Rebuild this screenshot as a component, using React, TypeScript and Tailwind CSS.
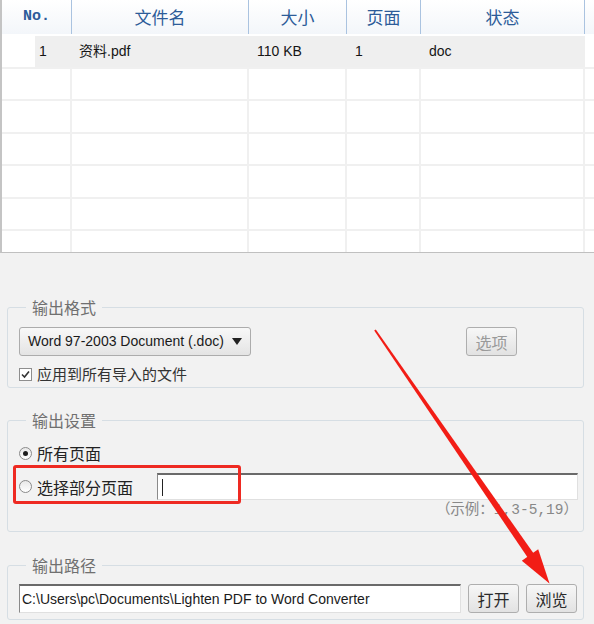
import React from "react";

const cjk = { fontFamily: '"Noto Sans CJK SC", "Liberation Sans", sans-serif' };
const latin = { fontFamily: '"Liberation Sans", "Noto Sans CJK SC", sans-serif' };

function HeaderCell({ w, children, mono }: { w: string; children?: React.ReactNode; mono?: boolean }) {
  return (
    <div
      className={`${w} h-full shrink-0 flex items-center justify-center border-r border-[#aac3e0] text-[#2d5c99] ${
        mono ? "text-[15px] font-bold" : "text-[17px]"
      }`}
      style={mono ? { fontFamily: '"Liberation Mono", monospace' } : cjk}
    >
      {children}
    </div>
  );
}

function EmptyRow() {
  return (
    <div className="h-[32.5px] flex border-t-2 border-[#f0f0f0] shrink-0">
      <div className="w-[72px] shrink-0 border-r-2 border-[#f0f0f0]" />
      <div className="w-[177px] shrink-0 border-r-2 border-[#f0f0f0]" />
      <div className="w-[98px] shrink-0 border-r-2 border-[#f0f0f0]" />
      <div className="w-[74px] shrink-0 border-r-2 border-[#f0f0f0]" />
      <div className="w-[164px] shrink-0 border-r-2 border-[#f0f0f0]" />
      <div className="flex-1" />
    </div>
  );
}

function Button({ children, disabled }: { children: React.ReactNode; disabled?: boolean }) {
  return (
    <div
      className={`w-[51px] h-[29px] shrink-0 flex items-center justify-center rounded-[3px] border border-[#aeaeae] bg-gradient-to-b from-[#f7f7f7] to-[#e2e2e2] text-[16px] ${
        disabled ? "text-[#9a9a9a]" : "text-[#2a2a2a]"
      }`}
      style={cjk}
    >
      {children}
    </div>
  );
}

function Legend({ children }: { children: React.ReactNode }) {
  return (
    <legend className="ml-[7px] px-[6px] text-[16px] leading-[20px] text-[#707070]" style={cjk}>
      {children}
    </legend>
  );
}

function Radio({ checked }: { checked?: boolean }) {
  return (
    <div className="w-[13px] h-[13px] shrink-0 rounded-full border border-[#8a8a8a] bg-gradient-to-b from-[#e8e8e8] to-white flex items-center justify-center">
      {checked && <div className="w-[5px] h-[5px] rounded-full bg-[#1e1e1e]" />}
    </div>
  );
}

export default function App() {
  return (
    <div className="relative w-[594px] h-[624px] overflow-hidden bg-[#f2f2f2]" style={latin}>
      {/* Table */}
      <div className="h-[253px] bg-white border-l-2 border-b border-l-[#c4c4c4] border-b-[#c0c0c0] flex flex-col overflow-hidden">
        <div className="h-[34px] shrink-0 flex bg-gradient-to-b from-white to-[#f3f6fa]">
          <HeaderCell w="w-[70px]" mono>
            No.
          </HeaderCell>
          <HeaderCell w="w-[177px]">文件名</HeaderCell>
          <HeaderCell w="w-[98px]">大小</HeaderCell>
          <HeaderCell w="w-[74px]">页面</HeaderCell>
          <HeaderCell w="w-[164px]">状态</HeaderCell>
          <div className="flex-1" />
        </div>
        {/* Row 1 */}
        <div className="h-[32.5px] shrink-0 flex border-t-2 border-white">
          <div className="w-[33px] shrink-0" />
          <div className="w-[550px] shrink-0 bg-[#efefef] flex items-center text-[14px] text-[#151515]">
            <div className="w-[37px] shrink-0 pl-[4px]">1</div>
            <div className="w-[177px] shrink-0 pl-[7px]">
              <span style={cjk}>资料</span>.pdf
            </div>
            <div className="w-[98px] shrink-0 pl-[8px]">110 KB</div>
            <div className="w-[74px] shrink-0 pl-[8px]">1</div>
            <div className="w-[164px] shrink-0 pl-[8px]">doc</div>
          </div>
          <div className="flex-1 border-l-2 border-white" />
        </div>
        <div className="ml-[-2px] flex flex-col">
          <EmptyRow />
          <EmptyRow />
          <EmptyRow />
          <EmptyRow />
          <EmptyRow />
          <EmptyRow />
        </div>
      </div>

      {/* 输出格式 */}
      <fieldset className="mt-[44px] ml-[7px] w-[577px] border border-[#d6dee4] rounded-[3px] pl-[11px] pr-[5px] pb-[3px]">
        <Legend>输出格式</Legend>
        <div className="pt-[10px] flex items-center">
          <div className="w-[232px] h-[29px] shrink-0 flex items-center justify-between pl-[8px] pr-[8px] rounded-[3px] border border-[#acacac] bg-gradient-to-b from-[#f8f8f8] to-[#e4e4e4] text-[14px] text-[#1a1a1a]">
            <span>Word 97-2003 Document (.doc)</span>
            <svg width="10" height="7" viewBox="0 0 10 7">
              <polygon points="0,0 10,0 5,7" fill="#222" />
            </svg>
          </div>
          <div className="ml-[215px]">
            <Button disabled>选项</Button>
          </div>
        </div>
        <div className="mt-[8px] h-[20px] flex items-center">
          <div className="w-[13px] h-[13px] shrink-0 border border-[#8e8e8e] bg-white flex items-center justify-center">
            <svg width="9" height="9" viewBox="0 0 9 9">
              <polyline points="1,4.5 3.5,7 8,1.5" fill="none" stroke="#333" strokeWidth="1.6" />
            </svg>
          </div>
          <span className="ml-[5px] text-[15px] text-[#333]" style={cjk}>
            应用到所有导入的文件
          </span>
        </div>
      </fieldset>

      {/* 输出设置 */}
      <fieldset className="mt-[22px] ml-[7px] w-[577px] border border-[#d6dee4] rounded-[3px] pl-[11px] pr-[5px] pb-[11px]">
        <Legend>输出设置</Legend>
        <div className="mt-[13px] h-[20px] flex items-center">
          <Radio checked />
          <span className="ml-[5px] text-[16px] text-[#222]" style={cjk}>
            所有页面
          </span>
        </div>
        <div className="mt-[10px] h-[27px] flex items-center">
          <Radio />
          <span className="ml-[5px] text-[16px] text-[#222]" style={cjk}>
            选择部分页面
          </span>
          <div className="ml-auto w-[421px] h-[27px] bg-white border-t-2 border-l border-t-[#6a6a6a] border-l-[#8a8a8a] border-r border-b border-r-[#e0e0e0] border-b-[#e0e0e0] flex items-center pl-[4px]">
            <div className="w-px h-[17px] bg-[#222]" />
          </div>
        </div>
        <div className="mt-[2px] h-[18px] flex justify-end items-center">
          <span className="mr-0 text-[14.5px] text-[#888]" style={{ fontFamily: '"Liberation Mono", "Noto Sans CJK SC", monospace' }}>
            （示例：1,3-5,19）
          </span>
        </div>
      </fieldset>

      {/* 输出路径 */}
      <fieldset className="mt-[23px] ml-[7px] w-[577px] border border-[#d6dee4] rounded-[3px] pl-[11px] pr-[5px] pb-[6px]">
        <Legend>输出路径</Legend>
        <div className="mt-[9px] flex items-center">
          <div className="w-[442px] h-[29px] shrink-0 bg-white border-t-2 border-l border-t-[#6a6a6a] border-l-[#8a8a8a] border-r border-b border-r-[#e0e0e0] border-b-[#e0e0e0] flex items-center pl-[2px] text-[14px] text-[#1a1a1a]">
            C:\Users\pc\Documents\Lighten PDF to Word Converter
          </div>
          <div className="ml-[7px]">
            <Button>打开</Button>
          </div>
          <div className="ml-[7px]">
            <Button>浏览</Button>
          </div>
        </div>
      </fieldset>

      {/* Annotation overlays */}
      <div className="absolute left-[13px] top-[465px] w-[228px] h-[39px] border-[3px] border-[#ee2a22] rounded-[3px] pointer-events-none" />
      <svg className="absolute left-0 top-0 pointer-events-none" width="594" height="624" viewBox="0 0 594 624">
        <polygon
          points="374.2,330.6 375.8,329.4 534,554 549.5,583.5 528,558"
          fill="#f21d16"
        />
        <polygon points="521.8,560.7 538.2,549.3 549.5,583.5" fill="#f21d16" />
      </svg>
    </div>
  );
}
